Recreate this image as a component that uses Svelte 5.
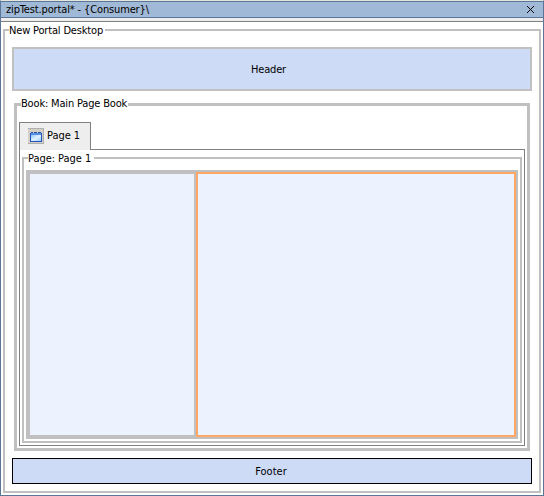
<script>
  let title = "zipTest.portal* - {Consumer}\\";
  let columns = [
    { width: 168, selected: false },
    { width: 320, selected: true },
  ];
</script>

<div class="window">
  <div class="titlebar">
    <span class="title">{title}</span>
    <svg class="close" width="7" height="7" viewBox="0 0 7 7" shape-rendering="crispEdges">
      <path d="M0 0h1v1h-1zM1 1h1v1h-1zM2 2h1v1h-1zM3 3h1v1h-1zM4 4h1v1h-1zM5 5h1v1h-1zM6 6h1v1h-1zM6 0h1v1h-1zM5 1h1v1h-1zM4 2h1v1h-1zM2 4h1v1h-1zM1 5h1v1h-1zM0 6h1v1h-1z" />
    </svg>
  </div>
  <div class="strip"></div>

  <div class="desktop">
    <span class="legend desktop-legend">New Portal Desktop</span>
    <div class="header"><span>Header</span></div>

    <div class="book">
      <span class="legend book-legend">Book: Main Page Book</span>
      <div class="tabs">
        <div class="tab">
          <svg width="16" height="16" viewBox="0 0 16 16" shape-rendering="crispEdges">
            <defs>
              <linearGradient id="pane" x1="0" y1="0" x2="1" y2="1">
                <stop offset="0" stop-color="#8fc4f7" />
                <stop offset="0.5" stop-color="#e2f3ff" />
                <stop offset="1" stop-color="#9bcbfa" />
              </linearGradient>
            </defs>
            <rect width="16" height="16" fill="#d4d0c8" />
            <path d="M0 0h16v1h-16zM15 1h1v15h-16v-1h15z" fill="#b0b0b0" />
            <path d="M3 4h2v1h-2zM6 4h3v1h-3zM10 4h3v1h-3z" fill="#284f9e" />
            <path d="M2 5h12v9h-12z" fill="#2054bd" />
            <rect x="3" y="5" width="10" height="2" fill="#578fe5" />
            <rect x="3" y="7" width="10" height="6" fill="url(#pane)" />
          </svg>
          <span>Page 1</span>
        </div>
        <div class="tab-line"></div>
      </div>

      <div class="tab-panel">
        <div class="page">
          <span class="legend page-legend">Page: Page 1</span>
          <div class="columns">
            {#each columns as column}
              <div class="column" class:selected={column.selected} style="width: {column.width}px"></div>
            {/each}
          </div>
        </div>
      </div>
    </div>

    <div class="footer"><span>Footer</span></div>
  </div>
</div>

<style>
  .window,
  .window * {
    box-sizing: border-box;
  }

  .window {
    display: flex;
    flex-direction: column;
    width: 544px;
    height: 496px;
    border: 1px solid #5a7699;
    border-top: 1px solid #e4e6de;
    background: white;
    color: black;
    font-family: "DejaVu Sans Condensed", "DejaVu Sans", sans-serif;
    font-stretch: condensed;
    font-size: 11px;
    line-height: 14px;
    letter-spacing: -0.17px;
    white-space: nowrap;
  }

  .titlebar {
    display: flex;
    align-items: center;
    justify-content: space-between;
    height: 17px;
    padding: 0 9px 0 5px;
    border-top: 1px solid #5a7699;
    border-bottom: 1px solid #5a7699;
    background: #a0b9d6;
  }

  .title {
    letter-spacing: -0.14px;
  }

  .strip {
    height: 4px;
    border-bottom: 1px solid #808080;
    background: #eeeeee;
  }

  .desktop {
    position: relative;
    width: 538px;
    height: 464px;
    margin: 7px 0 0 2px;
    padding: 16px 7px 0;
    border: 2px solid #c0c0c0;
  }

  .legend {
    position: absolute;
    background: white;
  }

  .desktop-legend {
    left: 4px;
    top: -7px;
    width: 96px;
  }

  .header,
  .footer {
    display: flex;
    align-items: center;
    justify-content: center;
    width: 520px;
    background: #cddbf6;
  }

  .header {
    height: 44px;
    padding: 1px 7px 0 0;
    border: 2px solid #c0c0c0;
  }

  .book {
    position: relative;
    width: 516px;
    height: 348px;
    margin: 12px 0 0 2px;
    padding: 16px 2px 0;
    border: 3px solid #c0c0c0;
  }

  .book-legend {
    left: 4px;
    top: -9px;
    width: 107px;
  }

  .tabs {
    display: flex;
    align-items: flex-end;
    height: 28px;
  }

  .tab {
    display: flex;
    align-items: center;
    gap: 3px;
    width: 72px;
    height: 28px;
    padding: 0 0 1px 8px;
    border: 1px solid #808080;
    border-bottom: none;
    background: #eeeeee;
  }

  .tab span {
    letter-spacing: -0.05px;
  }

  .tab-line {
    flex: 1;
    height: 1px;
    background: #808080;
  }

  .tab-panel {
    width: 506px;
    height: 296px;
    padding: 7px 2px 0;
    border: 1px solid #808080;
    border-top: none;
  }

  .page {
    position: relative;
    width: 500px;
    height: 286px;
    padding: 11px 2px 0;
    border: 2px solid #c0c0c0;
  }

  .page-legend {
    left: 4px;
    top: -7px;
    width: 66px;
    letter-spacing: -0.05px;
  }

  .columns {
    display: flex;
    width: 492px;
    height: 269px;
    border: 2px solid #c0c0c0;
  }

  .column {
    border: 2px solid #c0c0c0;
    background: #ecf3ff;
  }

  .column.selected {
    border-color: #ffa866;
  }

  .footer {
    height: 26px;
    margin: 7px 0 0;
    padding: 1px 2px 0 0;
    border: 1px solid black;
  }

  .footer span {
    letter-spacing: 0;
  }
</style>
